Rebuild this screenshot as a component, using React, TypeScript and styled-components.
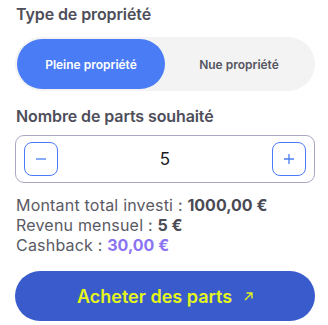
import { useState } from "react";
import styled, { createGlobalStyle } from "styled-components";

const GlobalStyle = createGlobalStyle`
  html, body {
    margin: 0;
    padding: 0;
    background: #ffffff;
  }
  body {
    font-family: Inter, "Noto Sans", sans-serif;
  }
`;

const Panel = styled.div`
  width: 300px;
  padding: 4px 0 0 15px;
  display: flex;
  flex-direction: column;
`;

const Label = styled.h3`
  margin: 0 0 0 1px;
  font-size: 16px;
  line-height: 20px;
  font-weight: 600;
  color: #4e4e5a;
  letter-spacing: -0.1px;
`;

const Toggle = styled.div`
  margin-top: 13px;
  height: 54px;
  padding: 2px;
  box-sizing: border-box;
  border-radius: 27px;
  background-color: #f3f3f3;
  display: grid;
  grid-template-columns: 148px 1fr;
`;

const ToggleOption = styled.button<{ $active: boolean }>`
  all: unset;
  cursor: pointer;
  border-radius: 25px;
  display: flex;
  align-items: center;
  justify-content: center;
  font-family: Inter, sans-serif;
  font-size: 12px;
  font-weight: 600;
  color: ${(p) => (p.$active ? "#ffffff" : "#55555f")};
  background-color: ${(p) => (p.$active ? "#4a7cf6" : "transparent")};
`;

const SecondLabel = styled(Label)`
  margin-top: 15px;
`;

const Stepper = styled.div`
  margin-top: 9px;
  height: 48px;
  box-sizing: border-box;
  border: 1px solid #a8a8c4;
  border-radius: 9px;
  padding: 0 8px;
  display: flex;
  align-items: center;
  justify-content: space-between;
`;

const StepButton = styled.button`
  all: unset;
  cursor: pointer;
  width: 34px;
  height: 34px;
  box-sizing: border-box;
  border: 1px solid #4a7cf6;
  border-radius: 8px;
  display: flex;
  align-items: center;
  justify-content: center;
  color: #4a7cf6;
`;

const Count = styled.span`
  font-size: 17px;
  color: #1b1b22;
`;

const Summary = styled.div`
  margin-top: 12px;
  margin-left: 1px;
  display: flex;
  flex-direction: column;
`;

const SummaryLine = styled.div`
  font-size: 16px;
  line-height: 20px;
  letter-spacing: 0.2px;
  color: #5a5a64;
`;

const Value = styled.strong<{ $accent?: boolean }>`
  font-weight: 700;
  letter-spacing: 0;
  color: ${(p) => (p.$accent ? "#8b74f2" : "#4a4a55")};
`;

const BuyButton = styled.button`
  all: unset;
  cursor: pointer;
  margin-top: 16px;
  height: 50px;
  border-radius: 25px;
  background-color: #3a5bcc;
  display: flex;
  align-items: center;
  justify-content: center;
  gap: 12px;
  font-family: Inter, sans-serif;
  font-size: 18px;
  font-weight: 600;
  color: #e4f51e;
`;

function MinusIcon() {
  return (
    <svg width="12" height="12" viewBox="0 0 12 12" fill="none">
      <path d="M1 6h10" stroke="currentColor" strokeWidth="1.3" />
    </svg>
  );
}

function PlusIcon() {
  return (
    <svg width="12" height="12" viewBox="0 0 12 12" fill="none">
      <path d="M1 6h10M6 1v10" stroke="currentColor" strokeWidth="1.3" />
    </svg>
  );
}

function ArrowIcon() {
  return (
    <svg width="9" height="9" viewBox="0 0 9 9" fill="none">
      <path
        d="M1 8L8 1M2.5 1H8v5.5"
        stroke="currentColor"
        strokeWidth="1.4"
      />
    </svg>
  );
}

export default function App() {
  const [full, setFull] = useState(true);
  const [parts, setParts] = useState(5);

  const total = parts * 200;
  const monthly = parts;
  const cashback = total * 0.03;
  const fmt = (n: number) => n.toFixed(2).replace(".", ",");

  return (
    <>
      <GlobalStyle />
      <Panel>
        <Label>Type de propriété</Label>
        <Toggle>
          <ToggleOption $active={full} onClick={() => setFull(true)}>
            Pleine propriété
          </ToggleOption>
          <ToggleOption $active={!full} onClick={() => setFull(false)}>
            Nue propriété
          </ToggleOption>
        </Toggle>

        <SecondLabel>Nombre de parts souhaité</SecondLabel>
        <Stepper>
          <StepButton onClick={() => setParts((p) => Math.max(1, p - 1))}>
            <MinusIcon />
          </StepButton>
          <Count>{parts}</Count>
          <StepButton onClick={() => setParts((p) => p + 1)}>
            <PlusIcon />
          </StepButton>
        </Stepper>

        <Summary>
          <SummaryLine>
            Montant total investi : <Value>{fmt(total)} €</Value>
          </SummaryLine>
          <SummaryLine>
            Revenu mensuel : <Value>{monthly} €</Value>
          </SummaryLine>
          <SummaryLine>
            Cashback : <Value $accent>{fmt(cashback)} €</Value>
          </SummaryLine>
        </Summary>

        <BuyButton>
          Acheter des parts
          <ArrowIcon />
        </BuyButton>
      </Panel>
    </>
  );
}
